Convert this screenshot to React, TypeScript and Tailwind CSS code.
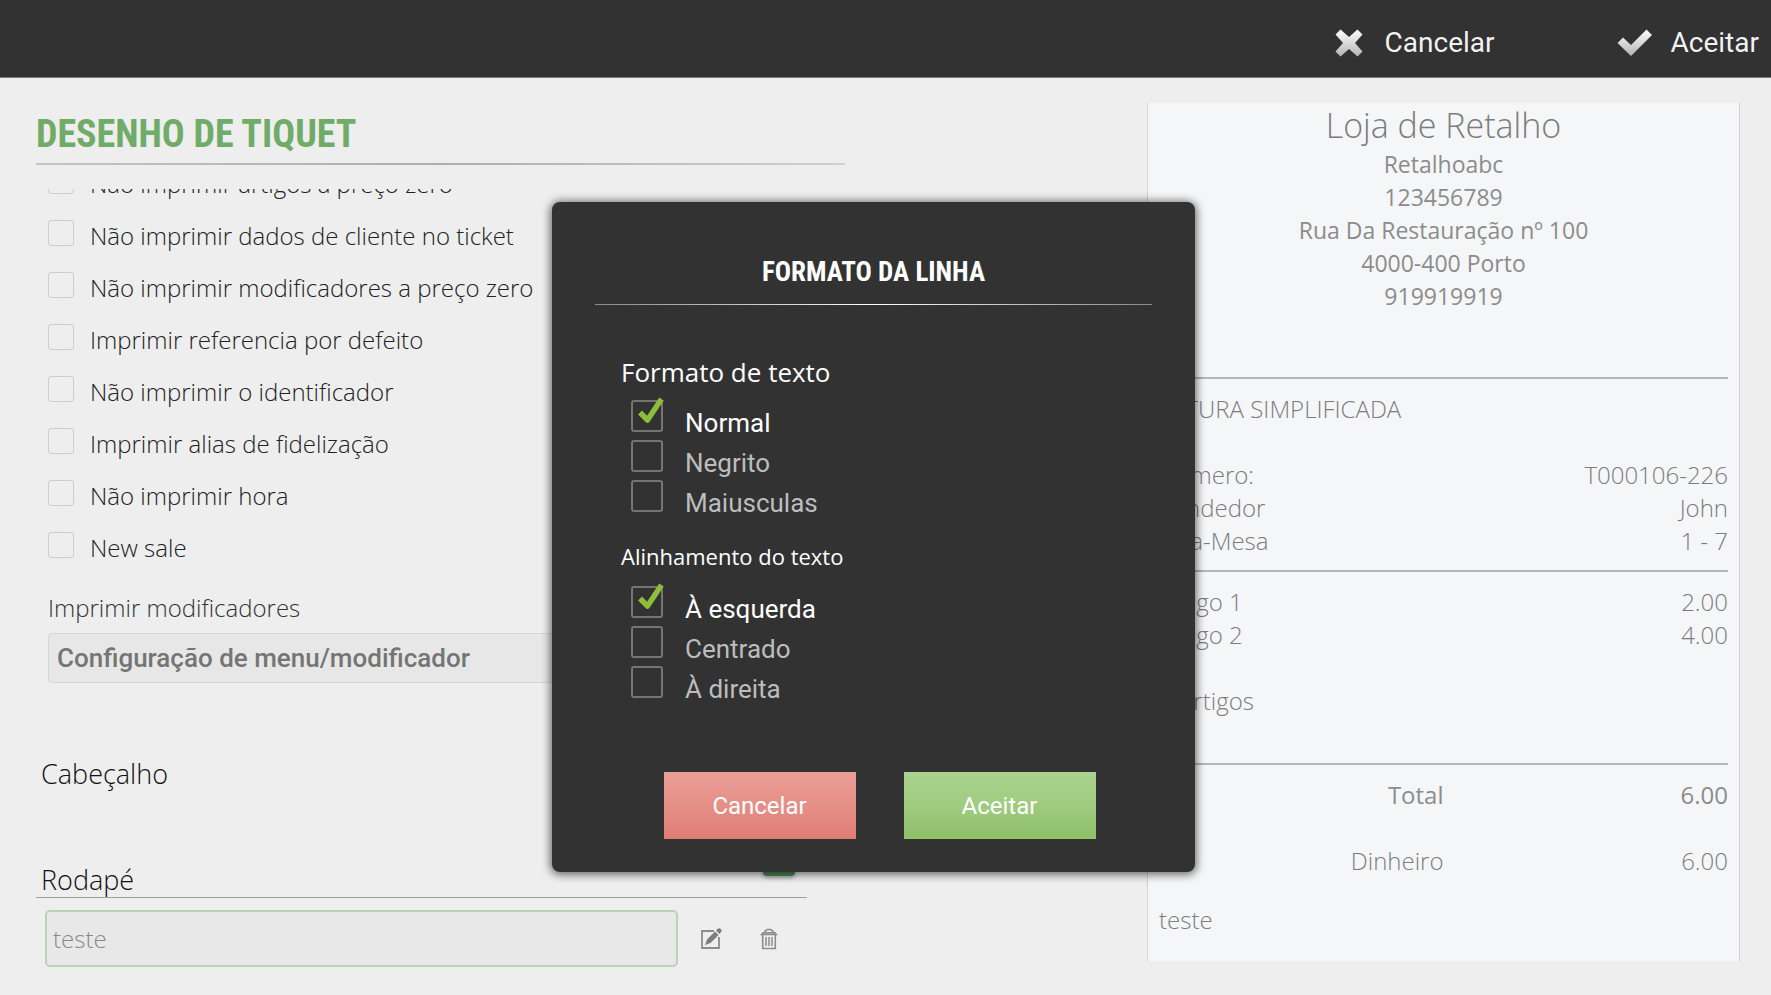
import { useState } from "react";

const printOptions = [
  "Não imprimir artigos a preço zero",
  "Não imprimir dados de cliente no ticket",
  "Não imprimir modificadores a preço zero",
  "Imprimir referencia por defeito",
  "Não imprimir o identificador",
  "Imprimir alias de fidelização",
  "Não imprimir hora",
  "New sale",
];

const storeLines = [
  "Retalhoabc",
  "123456789",
  "Rua Da Restauração nº 100",
  "4000-400 Porto",
  "919919919",
];

function CrossIcon() {
  return (
    <svg width="28" height="28" viewBox="0 0 28 28" aria-hidden="true">
      <defs>
        <linearGradient id="cross" x1="0" y1="0" x2="0" y2="1">
          <stop offset="0" stopColor="#ffffff" />
          <stop offset="1" stopColor="#b4b4b4" />
        </linearGradient>
      </defs>
      <path
        fill="url(#cross)"
        d="M5.5 0.5 14 8 22.5 0.5 27.5 5.5 20 14 27.5 22.5 22.5 27.5 14 20 5.5 27.5 0.5 22.5 8 14 0.5 5.5Z"
      />
    </svg>
  );
}

function TickIcon() {
  return (
    <svg width="36" height="28" viewBox="0 0 36 28" aria-hidden="true">
      <defs>
        <linearGradient id="tick" x1="0" y1="0" x2="0" y2="1">
          <stop offset="0" stopColor="#ffffff" />
          <stop offset="1" stopColor="#b4b4b4" />
        </linearGradient>
      </defs>
      <path fill="url(#tick)" d="M0.5 14 6 8.5 14 16 29.5 0.5 35 6 14 27Z" />
    </svg>
  );
}

function EditIcon() {
  return (
    <svg width="22" height="22" viewBox="0 0 22 22" fill="none" aria-hidden="true">
      <path d="M14 3H2v17h17V9" stroke="#8c8c8c" strokeWidth="1.8" />
      <path d="M5 17 7 11.500 15 3.500 18.500 7 10.500 15Z" fill="#7d7d7d" />
      <path d="M16 2.500 17.500 1a2.200 2.200 0 0 1 3.300 3.300L19.500 6Z" fill="#7d7d7d" />
    </svg>
  );
}

function TrashIcon() {
  return (
    <svg width="18" height="22" viewBox="0 0 18 22" fill="none" stroke="#8c8c8c" aria-hidden="true">
      <path d="M4.500 5 5.500 2.500 7.500 1.500h3l2 1 1 2.500" strokeWidth="1.600" />
      <path d="M1.500 6.500 3 4.700h12l1.500 1.800Z" strokeWidth="1.400" />
      <path d="M2.700 7v13.500h12.600V7" strokeWidth="1.600" />
      <path d="M6 9v9M9 9v9M12 9v9" strokeWidth="1.500" />
    </svg>
  );
}

function Rule() {
  return <hr className="mt-[13px] h-0.5 border-0 bg-[#b4b5b7]" />;
}

type ChoiceGroupProps = {
  options: string[];
  value: string;
  onChange: (value: string) => void;
};

function ChoiceGroup({ options, value, onChange }: ChoiceGroupProps) {
  return (
    <div className="flex flex-col pl-2.5">
      {options.map((option) => {
        const selected = option === value;
        return (
          <label key={option} className="flex h-10 items-start gap-[22px]">
            <span className="relative block size-8 shrink-0">
              <input
                type="checkbox"
                checked={selected}
                onChange={() => onChange(option)}
                className="block size-8 appearance-none rounded-[3px] border-2 border-[#757575]"
              />
              {selected && (
                <svg
                  className="pointer-events-none absolute -top-1 left-1.5"
                  width="28"
                  height="28"
                  viewBox="0 0 28 28"
                  fill="none"
                  aria-hidden="true"
                >
                  <path
                    d="M3 16.500 10.500 24 24.500 3"
                    stroke="#8fbc3a"
                    strokeWidth="5.500"
                    strokeLinejoin="round"
                  />
                </svg>
              )}
            </span>
            <span
              className={
                selected
                  ? "pt-[7px] text-[26px] leading-8 text-white"
                  : "pt-[7px] text-[26px] leading-8 text-[#bdbdbd]"
              }
            >
              {option}
            </span>
          </label>
        );
      })}
    </div>
  );
}

function FormatDialog() {
  const [format, setFormat] = useState("Normal");
  const [align, setAlign] = useState("À esquerda");

  return (
    <div className="absolute inset-x-0 top-[202px] flex justify-center pr-6">
      <div
        role="dialog"
        aria-labelledby="dialog-title"
        className="w-[643px] rounded-lg bg-[#323232] px-[43px] pt-[46px] pb-[33px] font-['Roboto',sans-serif] shadow-[0_1px_8px_2px_rgba(0,0,0,0.55)]"
      >
        <h2
          id="dialog-title"
          className="text-center font-['Liberation_Sans_Narrow','Roboto_Condensed','Roboto',sans-serif] text-[27px] leading-12 font-bold text-white"
        >
          FORMATO DA LINHA
        </h2>
        <hr className="mt-2 h-px border-0 bg-linear-to-r from-[#8a8a8a] via-white to-[#8a8a8a]" />

        <div className="px-[26px] pt-[43px]">
          <h3 className="mb-1 font-['Open_Sans',sans-serif] text-[26px] leading-12 text-white">
            Formato de texto
          </h3>
          <ChoiceGroup
            options={["Normal", "Negrito", "Maiusculas"]}
            value={format}
            onChange={setFormat}
          />
          <h3 className="mt-4 mb-2.5 font-['Open_Sans',sans-serif] text-[22px] leading-10 text-white">
            Alinhamento do texto
          </h3>
          <ChoiceGroup
            options={["À esquerda", "Centrado", "À direita"]}
            value={align}
            onChange={setAlign}
          />
        </div>

        <div className="mt-[66px] flex justify-center gap-12 pl-3 text-2xl text-white">
          <button className="h-[67px] w-48 bg-linear-to-b from-[#ea9e97] via-[#e58f86] to-[#e07d74]">
            Cancelar
          </button>
          <button className="h-[67px] w-48 bg-linear-to-b from-[#aad48e] via-[#9fcb7f] to-[#8dc068]">
            Aceitar
          </button>
        </div>
      </div>
    </div>
  );
}

function SettingsPanel() {
  return (
    <section className="w-[47.5%]">
      <h1 className="pt-7 font-['Liberation_Sans_Narrow','Roboto_Condensed','Roboto',sans-serif] text-[38px] leading-[57px] font-bold text-[#70ab67]">
        DESENHO DE TIQUET
      </h1>
      <hr className="h-0.5 border-0 bg-linear-to-r from-[#c4c4c4] via-[#adadad] to-[#d0d0d0]" />

      <ul className="mt-6 overflow-hidden pl-3 text-[24px] leading-8 font-light text-[#222]">
        {printOptions.map((option) => (
          <li key={option} className="h-[52px] first:-mt-[21px]">
            <label className="flex items-start gap-4">
              <input
                type="checkbox"
                className="size-[26px] shrink-0 appearance-none rounded-[3px] border border-[#cdcdcd]"
              />
              {option}
            </label>
          </li>
        ))}
      </ul>

      <div className="flex flex-col gap-[9px] pt-2 pl-3">
        <label htmlFor="modifiers" className="text-[24px] leading-8 font-light text-[#333]">
          Imprimir modificadores
        </label>
        <select
          id="modifiers"
          className="h-[50px] w-[640px] appearance-none rounded-sm border border-[#d6d6d6] bg-[#e7e7e7] px-2 font-['Roboto',sans-serif] text-[26px] font-medium text-[#757575]"
        >
          <option>Configuração de menu/modificador</option>
        </select>
      </div>

      <div className="mt-[54px] flex h-[54px] w-[771px] items-start justify-between pr-3 pl-[5px]">
        <h2 className="self-end text-[27px] leading-[34px] font-light text-[#111]">Cabeçalho</h2>
        <button aria-label="Adicionar cabeçalho" className="size-8 rounded-sm bg-[#4f8a56]" />
      </div>

      <div className="mt-[53px] flex h-[54px] w-[771px] items-start justify-between border-b border-[#a0a0a0] pr-3 pl-[5px]">
        <h2 className="self-end text-[27px] leading-[34px] font-light text-[#111]">Rodapé</h2>
        <button
          aria-label="Adicionar rodapé"
          className="size-8 rounded-sm bg-[#4f8a56] shadow-[0_2px_4px_rgba(0,0,0,0.3)]"
        />
      </div>

      <div className="mt-3 flex items-center pl-[9px]">
        <input
          type="text"
          aria-label="Linha de rodapé"
          defaultValue="teste"
          className="h-[57px] w-[633px] rounded-[5px] border-2 border-[#b9d3b5] bg-[#e8e8e8] px-1.5 text-[24px] font-light text-[#888]"
        />
        <button aria-label="Editar" className="ml-[22px]">
          <EditIcon />
        </button>
        <button aria-label="Eliminar" className="ml-[38px]">
          <TrashIcon />
        </button>
      </div>
    </section>
  );
}

function Receipt() {
  return (
    <aside className="mt-[25px] w-[34.8%] border-x border-x-[#d3d3d3] bg-[#f5f6f8] px-[11px] pb-[25px] text-[24px] leading-[33px] font-light text-[#7c7c7c]">
      <header className="text-center">
        <p className="text-[34px] leading-[45px]">Loja de Retalho</p>
        {storeLines.map((line) => (
          <p key={line} className="text-[23px] font-normal text-[#8c8c8c]">
            {line}
          </p>
        ))}
      </header>

      <div className="pt-[51px]">
        <Rule />
      </div>
      <p className="mt-[13px]">FATURA SIMPLIFICADA</p>
      <table className="mt-[33px] w-full">
        <tbody>
          <tr>
            <td>Número:</td>
            <td className="text-right">T000106-226</td>
          </tr>
          <tr>
            <td>Vendedor</td>
            <td className="text-right">John</td>
          </tr>
          <tr>
            <td>Sala-Mesa</td>
            <td className="text-right">1 - 7</td>
          </tr>
        </tbody>
      </table>

      <Rule />
      <table className="mt-[13px] w-full">
        <tbody>
          <tr>
            <td>Artigo 1</td>
            <td className="text-right">2.00</td>
          </tr>
          <tr>
            <td>Artigo 2</td>
            <td className="text-right">4.00</td>
          </tr>
        </tbody>
      </table>
      <p className="mt-[33px] pb-[33px]">2 Artigos</p>

      <Rule />
      <table className="mt-[13px] w-full">
        <tbody>
          <tr className="font-normal text-[#8c8c8c]">
            <td className="w-1/2 pb-[33px] text-right">Total</td>
            <td className="w-1/2 pb-[33px] text-right">6.00</td>
          </tr>
          <tr>
            <td className="text-right">Dinheiro</td>
            <td className="text-right">6.00</td>
          </tr>
        </tbody>
      </table>
      <p className="mt-[26px]">teste</p>
    </aside>
  );
}

export default function App() {
  return (
    <div className="relative min-h-screen bg-[#eeeeee] font-['Open_Sans',sans-serif]">
      <header className="flex h-[78px] items-center justify-end border-b border-[#7a7a7a] bg-[#323232] pt-2 pr-3 font-['Roboto',sans-serif] text-[28px] text-white/95">
        <button className="flex items-center gap-[22px]">
          <CrossIcon />
          Cancelar
        </button>
        <button className="ml-[122px] flex items-center gap-[18px]">
          <TickIcon />
          Aceitar
        </button>
      </header>

      <main className="flex items-start justify-between pr-[31px] pb-7 pl-9">
        <SettingsPanel />
        <Receipt />
      </main>

      <FormatDialog />
    </div>
  );
}
